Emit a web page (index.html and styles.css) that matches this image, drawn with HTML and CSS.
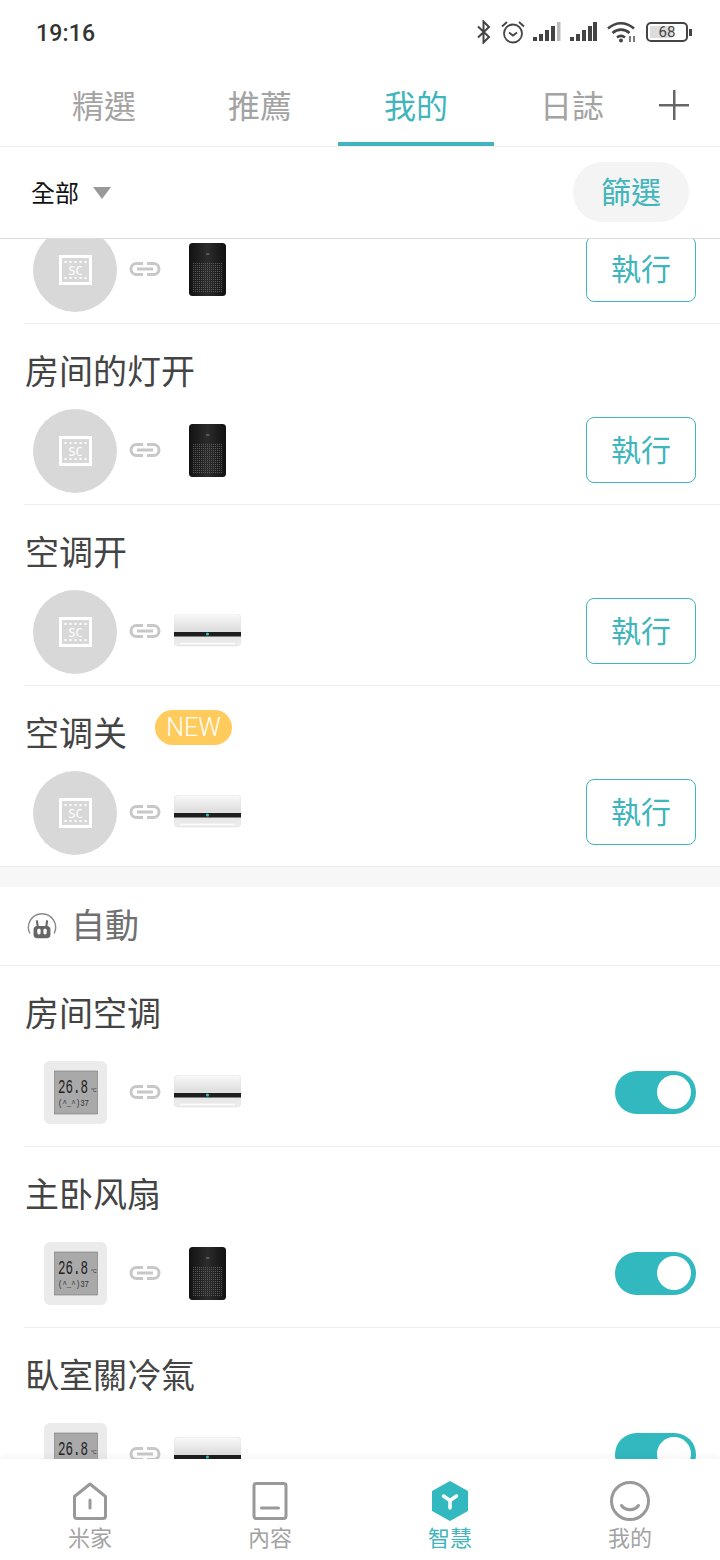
FILE: index.html
```html
<!DOCTYPE html>
<html lang="zh-Hant">
<head>
  <meta charset="UTF-8">
  <meta name="viewport" content="width=device-width, initial-scale=1.0">
  <title>智慧</title>
  <link rel="stylesheet" href="styles.css">
</head>
<body>
  <svg class="sprite" xmlns="http://www.w3.org/2000/svg">
    <defs>
      <linearGradient id="speaker-fill" x1="0" x2="1" y1="0" y2="0">
        <stop offset="0" stop-color="#111"/>
        <stop offset="0.5" stop-color="#2c2c2c"/>
        <stop offset="1" stop-color="#111"/>
      </linearGradient>
      <linearGradient id="ac-fill" x1="0" x2="0" y1="0" y2="1">
        <stop offset="0" stop-color="#fafafa"/>
        <stop offset="0.5" stop-color="#dedede"/>
        <stop offset="1" stop-color="#f0f0f0"/>
      </linearGradient>
      <pattern id="mesh" width="2" height="2" patternUnits="userSpaceOnUse">
        <rect width="1" height="1" fill="#5a5a5a"/>
      </pattern>
      <pattern id="film-holes" width="5" height="4" patternUnits="userSpaceOnUse">
        <rect x="1.5" y="1" width="2" height="2" fill="#fff"/>
      </pattern>
    </defs>
    <symbol id="scene" viewBox="0 0 84 84">
      <circle cx="42" cy="42" r="42" fill="#d8d8d8"/>
      <rect x="27.5" y="28.5" width="30" height="27" fill="none" stroke="#fff" stroke-width="3"/>
      <rect x="30" y="31" width="25" height="4" fill="url(#film-holes)"/>
      <rect x="30" y="49" width="25" height="4" fill="url(#film-holes)"/>
    </symbol>
    <symbol id="link" viewBox="0 0 32 16">
      <g fill="none" stroke="#c8c8c8" stroke-width="3">
        <path d="M14 2.500H7.500a5.500 5.500 0 0 0 0 11H14"/>
        <path d="M18 2.500h6.500a5.500 5.500 0 0 1 0 11H18"/>
        <path d="M8 8h16"/>
      </g>
    </symbol>
    <symbol id="speaker" viewBox="0 0 37 53">
      <rect x="0" y="0" width="37" height="53" rx="3.500" fill="url(#speaker-fill)"/>
      <rect x="3" y="20" width="31" height="30" fill="url(#mesh)"/>
      <rect x="17" y="10" width="3.500" height="2" fill="#555"/>
    </symbol>
    <symbol id="ac" viewBox="0 0 67 34">
      <rect x="0" y="0" width="67" height="32" rx="4" fill="url(#ac-fill)" stroke="#e0e0e0" stroke-width="0.6"/>
      <rect x="0" y="18" width="67" height="4.500" fill="#1e1e1e"/>
      <circle cx="33.500" cy="20" r="1.500" fill="#35c4c8"/>
      <rect x="5" y="28" width="57" height="3" fill="#fafafa" stroke="#d8d8d8" stroke-width="0.5"/>
    </symbol>
    <symbol id="thermo" viewBox="0 0 63 63">
      <rect width="63" height="63" rx="6" fill="#ebebeb"/>
      <rect x="10.500" y="10" width="43" height="43" fill="#a9a9a9" stroke="#777" stroke-width="0.6"/>
    </symbol>
  </svg>

  <div class="status-bar">
    <span class="clock">19:16</span>
    <div class="status-icons">
      <svg class="st-bt" viewBox="0 0 15 24"><path d="M2 6.500 13 17l-5.500 5.500V1.500L13 7 2 17.500" fill="none" stroke="#444" stroke-width="2"/></svg>
      <svg class="st-alarm" viewBox="0 0 24 24"><circle cx="12" cy="13.500" r="9" fill="none" stroke="#444" stroke-width="1.800"/><path d="M8 12.500l4 3 4-3M1 6.500 6 2M23 6.500 18 2" fill="none" stroke="#444" stroke-width="1.800"/></svg>
      <svg class="st-signal" viewBox="0 0 28 20">
        <rect x="0" y="15" width="4" height="4" fill="#444"/><rect x="6" y="12" width="4" height="7" fill="#444"/><rect x="12" y="8" width="4" height="11" fill="#444"/><rect x="18" y="4" width="4" height="15" fill="#444"/><rect x="24" y="0" width="3.500" height="19" fill="#bbb"/>
      </svg>
      <svg class="st-signal" viewBox="0 0 28 20">
        <rect x="0" y="15" width="4" height="4" fill="#444"/><rect x="6" y="12" width="4" height="7" fill="#444"/><rect x="12" y="8" width="4" height="11" fill="#444"/><rect x="18" y="4" width="4" height="15" fill="#444"/><rect x="23" y="0" width="4" height="19" fill="#444"/>
      </svg>
      <svg class="st-wifi" viewBox="0 0 30 22">
        <path d="M1 7.500C9 .5 19 .5 27 7.500M5.500 12c5-4.500 12-4.500 17 0M10 16.500c2.500-2 5.500-2 8 0" fill="none" stroke="#444" stroke-width="2.600"/>
        <circle cx="14" cy="19.500" r="2" fill="#444"/>
        <path d="M23 15v6M27 15v6" stroke="#444" stroke-width="1.400"/>
      </svg>
      <div class="battery">
        <div class="battery-body"><span class="battery-text">68</span></div>
        <div class="battery-tip"></div>
      </div>
    </div>
  </div>

  <div class="tabs">
    <div class="tab">精選</div>
    <div class="tab">推薦</div>
    <div class="tab active">我的</div>
    <div class="tab">日誌</div>
    <div class="tab-add"><span class="plus"></span></div>
  </div>

  <div class="filter-bar">
    <div class="filter-all">全部<span class="arrow"></span></div>
    <div class="filter-btn">篩選</div>
  </div>

  <div class="content">
    <div class="row row-clipped">
      <div class="devices">
        <svg class="scene" viewBox="0 0 84 84"><use href="#scene"/><text x="42.500" y="46.500" class="scene-text" text-anchor="middle">SC</text></svg>
        <svg class="link"><use href="#link"/></svg>
        <div class="dev-slot"><svg class="speaker"><use href="#speaker"/></svg></div>
        <div class="run-btn">執行</div>
      </div>
    </div>
    <div class="row">
      <div class="title" lang="zh-Hans">房间的灯开</div>
      <div class="devices">
        <svg class="scene" viewBox="0 0 84 84"><use href="#scene"/><text x="42.500" y="46.500" class="scene-text" text-anchor="middle">SC</text></svg>
        <svg class="link"><use href="#link"/></svg>
        <div class="dev-slot"><svg class="speaker"><use href="#speaker"/></svg></div>
        <div class="run-btn">執行</div>
      </div>
    </div>
    <div class="row">
      <div class="title" lang="zh-Hans">空调开</div>
      <div class="devices">
        <svg class="scene" viewBox="0 0 84 84"><use href="#scene"/><text x="42.500" y="46.500" class="scene-text" text-anchor="middle">SC</text></svg>
        <svg class="link"><use href="#link"/></svg>
        <div class="dev-slot"><svg class="ac"><use href="#ac"/></svg></div>
        <div class="run-btn">執行</div>
      </div>
    </div>
    <div class="row last">
      <div class="title" lang="zh-Hans">空调关<span class="badge">NEW</span></div>
      <div class="devices">
        <svg class="scene" viewBox="0 0 84 84"><use href="#scene"/><text x="42.500" y="46.500" class="scene-text" text-anchor="middle">SC</text></svg>
        <svg class="link"><use href="#link"/></svg>
        <div class="dev-slot"><svg class="ac"><use href="#ac"/></svg></div>
        <div class="run-btn">執行</div>
      </div>
    </div>

    <div class="section-gap"></div>
    <div class="section-head">
      <svg class="robot" viewBox="0 0 32 32">
        <path d="M3 25A14.500 14.500 0 1 1 29 25" fill="none" stroke="#888" stroke-width="1.500"/>
        <path d="M10.500 11l1 7M21.500 11l-1 7" stroke="#666" stroke-width="2.200"/>
        <rect x="7" y="17" width="18" height="13" rx="4" fill="#666"/>
        <rect x="11" y="20" width="3.500" height="6" rx="1.500" fill="#fff"/>
        <rect x="17.500" y="20" width="3.500" height="6" rx="1.500" fill="#fff"/>
      </svg>
      <span>自動</span>
    </div>

    <div class="row">
      <div class="title" lang="zh-Hans">房间空调</div>
      <div class="devices">
        <div class="dev-main">
          <svg class="thermo" viewBox="0 0 63 63"><use href="#thermo"/><text x="14" y="32" class="lcd-big" textLength="30" lengthAdjust="spacingAndGlyphs">26.8</text><text x="47" y="31" class="lcd-small">°C</text><text x="14" y="44.500" class="lcd-mid" textLength="31" lengthAdjust="spacingAndGlyphs">(^_^)37</text></svg>
        </div>
        <svg class="link"><use href="#link"/></svg>
        <div class="dev-slot"><svg class="ac"><use href="#ac"/></svg></div>
        <div class="toggle"><span class="knob"></span></div>
      </div>
    </div>
    <div class="row">
      <div class="title" lang="zh-Hans">主卧风扇</div>
      <div class="devices">
        <div class="dev-main">
          <svg class="thermo" viewBox="0 0 63 63"><use href="#thermo"/><text x="14" y="32" class="lcd-big" textLength="30" lengthAdjust="spacingAndGlyphs">26.8</text><text x="47" y="31" class="lcd-small">°C</text><text x="14" y="44.500" class="lcd-mid" textLength="31" lengthAdjust="spacingAndGlyphs">(^_^)37</text></svg>
        </div>
        <svg class="link"><use href="#link"/></svg>
        <div class="dev-slot"><svg class="speaker"><use href="#speaker"/></svg></div>
        <div class="toggle"><span class="knob"></span></div>
      </div>
    </div>
    <div class="row">
      <div class="title">臥室關冷氣</div>
      <div class="devices">
        <div class="dev-main">
          <svg class="thermo" viewBox="0 0 63 63"><use href="#thermo"/><text x="14" y="32" class="lcd-big" textLength="30" lengthAdjust="spacingAndGlyphs">26.8</text><text x="47" y="31" class="lcd-small">°C</text><text x="14" y="44.500" class="lcd-mid" textLength="31" lengthAdjust="spacingAndGlyphs">(^_^)37</text></svg>
        </div>
        <svg class="link"><use href="#link"/></svg>
        <div class="dev-slot"><svg class="ac"><use href="#ac"/></svg></div>
        <div class="toggle"><span class="knob"></span></div>
      </div>
    </div>
  </div>

  <div class="bottom-nav">
    <div class="nav-item">
      <svg class="nav-icon" viewBox="0 0 40 40">
        <path d="M20 3 35.500 15.500V35a2.500 2.500 0 0 1-2.500 2.500H7A2.500 2.500 0 0 1 4.500 35V15.500Z" fill="none" stroke="#999" stroke-width="3" stroke-linejoin="round"/>
        <path d="M20 19v8" stroke="#999" stroke-width="3" stroke-linecap="round"/>
      </svg>
      <span>米家</span>
    </div>
    <div class="nav-item">
      <svg class="nav-icon" viewBox="0 0 40 40">
        <rect x="4" y="2.500" width="32" height="35" rx="2.500" fill="none" stroke="#999" stroke-width="3"/>
        <path d="M11.500 27h17" stroke="#999" stroke-width="3" stroke-linecap="round"/>
      </svg>
      <span>內容</span>
    </div>
    <div class="nav-item active">
      <svg class="nav-icon" viewBox="0 0 40 40">
        <path d="M20 1 37 10.500V29.500L20 39 3 29.500V10.500Z" fill="#32b9bf" stroke="#32b9bf" stroke-width="2" stroke-linejoin="round"/>
        <path d="M13.500 15 20 19.500l6.500-4.500M20 19.500v7.500" fill="none" stroke="#fff" stroke-width="3.500" stroke-linecap="round" stroke-linejoin="round"/>
      </svg>
      <span>智慧</span>
    </div>
    <div class="nav-item">
      <svg class="nav-icon" viewBox="0 0 40 40">
        <circle cx="20" cy="20" r="18.500" fill="none" stroke="#999" stroke-width="3"/>
        <path d="M11.500 24.500c4 5.500 13 5.500 17 0" fill="none" stroke="#999" stroke-width="3" stroke-linecap="round"/>
      </svg>
      <span>我的</span>
    </div>
  </div>
</body>
</html>
```
FILE: styles.css
```css
* {
  box-sizing: border-box;
}
body {
  font-family: "Noto Sans CJK TC", "Noto Sans CJK SC", "Noto Sans", sans-serif;
  background-color: #fff;
  color: #333;
  margin: 0;
  height: 1560px;
  overflow: hidden;
  display: flex;
  flex-direction: column;
}
.sprite {
  width: 0;
  height: 0;
  flex: none;
}
.scene-text {
  font-family: "DejaVu Sans Mono", monospace;
  font-size: 12px;
  fill: #fff;
}
.lcd-big {
  font-family: "Liberation Mono", monospace;
  font-size: 20px;
  fill: #222;
}
.lcd-mid {
  font-family: "Liberation Mono", monospace;
  font-size: 9px;
  fill: #333;
}
.lcd-small {
  font-family: "Liberation Sans", sans-serif;
  font-size: 5px;
  fill: #333;
}

/* status bar */
.status-bar {
  height: 66px;
  flex: none;
  display: flex;
  align-items: center;
  justify-content: space-between;
  padding: 0 28px 2px 36px;
}
.clock {
  font-family: Roboto, sans-serif;
  font-size: 23px;
  font-weight: 500;
  letter-spacing: 0.2px;
  color: #333;
  margin-top: 2px;
}
.status-icons {
  display: flex;
  align-items: center;
}
.status-icons svg {
  display: block;
}
.st-bt {
  width: 15px;
  height: 24px;
  margin-right: 10px;
}
.st-alarm {
  width: 24px;
  height: 24px;
  margin-right: 8px;
}
.st-signal {
  width: 28px;
  height: 20px;
  margin-right: 9px;
}
.st-wifi {
  width: 30px;
  height: 22px;
  margin-right: 9px;
}
.battery {
  display: flex;
  align-items: center;
}
.battery-body {
  width: 42px;
  height: 20px;
  border: 2px solid #444;
  border-radius: 5px;
  background: linear-gradient(#ddd, #ddd) 2px 2px / 22px 12px no-repeat;
  display: flex;
  align-items: center;
  justify-content: center;
}
.battery-text {
  font-family: Roboto, sans-serif;
  font-size: 15px;
  line-height: 16px;
  color: #444;
}
.battery-tip {
  width: 3px;
  height: 7px;
  background-color: #444;
  margin-left: 1px;
}

/* tabs */
.tabs {
  height: 81px;
  flex: none;
  display: flex;
  padding-left: 26px;
  border-bottom: 1px solid #eee;
}
.tab {
  width: 156px;
  height: 80px;
  font-size: 32px;
  color: #a3a3a3;
  text-align: center;
  line-height: 76px;
  border-bottom: 4px solid transparent;
}
.tab.active {
  color: #40b5bb;
  border-bottom-color: #40b5bb;
}
.tab-add {
  flex: 1;
  display: flex;
  justify-content: center;
  align-items: center;
  padding: 0 22px 2px 0;
}
.plus {
  width: 30px;
  height: 30px;
  background: linear-gradient(#666, #666) center / 100% 2.500px no-repeat, linear-gradient(#666, #666) center / 2.500px 100% no-repeat;
}

/* filter */
.filter-bar {
  height: 92px;
  flex: none;
  display: flex;
  align-items: center;
  justify-content: space-between;
  padding: 0 31px 2px 31px;
  border-bottom: 1px solid #ddd;
}
.filter-all {
  font-size: 24px;
  line-height: 32px;
  color: #111;
  display: flex;
  align-items: center;
}
.arrow {
  width: 0;
  height: 0;
  margin: 2px 0 0 14px;
  border-left: 9.5px solid transparent;
  border-right: 9.5px solid transparent;
  border-top: 12px solid #999;
}
.filter-btn {
  width: 116px;
  height: 60px;
  border-radius: 30px;
  background-color: #f4f4f4;
  color: #40b5bb;
  font-size: 30px;
  line-height: 56px;
  text-align: center;
}

/* list */
.content {
  flex: 1;
  overflow: hidden;
}
.row {
  margin-left: 24px;
  padding: 24px 24px 12px 1px;
  border-bottom: 1px solid #eee;
}
.row.last {
  border-bottom: none;
}
.row-clipped {
  padding-top: 0;
}
.row-clipped .devices {
  margin-top: -12px;
}
.title {
  height: 46px;
  font-size: 34px;
  line-height: 44px;
  color: #444;
  margin-bottom: 14px;
  display: flex;
}
.badge {
  height: 35px;
  width: 77px;
  margin-left: 28px;
  border-radius: 18px;
  background-color: #ffcb5c;
  color: #fff;
  font-family: Roboto, sans-serif;
  font-size: 25px;
  font-weight: 300;
  line-height: 36px;
  text-align: center;
}
.devices {
  height: 84px;
  display: flex;
  align-items: center;
  padding-left: 8px;
}
.scene {
  width: 84px;
  height: 84px;
  flex: none;
  margin-top: 2px;
}
.dev-main {
  width: 84px;
  height: 84px;
  flex: none;
  display: flex;
  align-items: center;
  justify-content: center;
}
.link {
  width: 32px;
  height: 16px;
  margin-left: 12px;
  flex: none;
}
.dev-slot {
  width: 67px;
  margin-left: 13px;
  display: flex;
  justify-content: center;
  flex: none;
}
.speaker {
  width: 37px;
  height: 53px;
  display: block;
  margin-top: 1px;
}
.ac {
  width: 67px;
  height: 34px;
  display: block;
}
.thermo {
  width: 63px;
  height: 63px;
  display: block;
}
.run-btn {
  width: 110px;
  height: 66px;
  margin-left: auto;
  border: 1.5px solid #40b5bb;
  border-radius: 8px;
  color: #40b5bb;
  font-size: 30px;
  line-height: 60px;
  text-align: center;
}
.toggle {
  width: 81px;
  height: 43px;
  margin-left: auto;
  border-radius: 22px;
  background-color: #32b9bf;
  display: flex;
  align-items: center;
  justify-content: flex-end;
  padding-right: 5px;
}
.knob {
  width: 34px;
  height: 34px;
  border-radius: 50%;
  background-color: #fff;
}
.section-gap {
  height: 21px;
  background-color: #f7f7f7;
  border-top: 1px solid #eee;
}
.section-head {
  height: 79px;
  display: flex;
  align-items: center;
  padding-left: 27px;
  border-bottom: 1px solid #eee;
  font-size: 34px;
  line-height: 46px;
  color: #707070;
}
.section-head span {
  margin-top: -4px;
}
.robot {
  width: 30px;
  height: 30px;
  margin-right: 14px;
  margin-top: -2px;
}

/* bottom nav */
.bottom-nav {
  height: 101px;
  flex: none;
  display: flex;
  background-color: #fff;
  box-shadow: 0 -3px 6px rgba(0, 0, 0, 0.04);
  z-index: 2;
}
.nav-item {
  width: 180px;
  display: flex;
  flex-direction: column;
  align-items: center;
  padding-top: 22px;
  font-size: 22px;
  line-height: 30px;
  color: #a3a3a3;
}
.nav-item.active {
  color: #40b5bb;
}
.nav-icon {
  width: 40px;
  height: 40px;
}
```
